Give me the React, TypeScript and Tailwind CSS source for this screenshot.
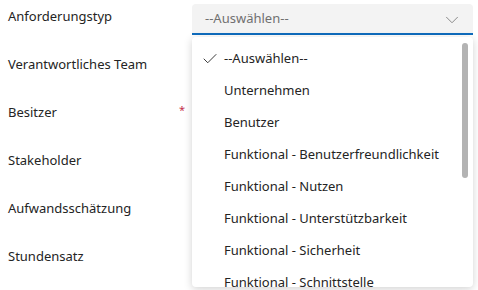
import { Check, ChevronDown } from 'lucide-react'

const LABELS = [
  { text: 'Anforderungstyp', required: false },
  { text: 'Verantwortliches Team', required: false },
  { text: 'Besitzer', required: true },
  { text: 'Stakeholder', required: false },
  { text: 'Aufwandsschätzung', required: false },
  { text: 'Stundensatz', required: false },
]

const OPTIONS = [
  '--Auswählen--',
  'Unternehmen',
  'Benutzer',
  'Funktional - Benutzerfreundlichkeit',
  'Funktional - Nutzen',
  'Funktional - Unterstützbarkeit',
  'Funktional - Sicherheit',
  'Funktional - Schnittstelle',
]

export default function App() {
  return (
    <div
      className="relative w-[478px] h-[290px] overflow-hidden bg-white text-[13px] text-[#242424]"
      style={{ fontFamily: '"Noto Sans", "Open Sans", sans-serif' }}
    >
      <div className="flex">
        <div className="w-[192px] pl-2 pr-[7px] pt-[6px]">
          {LABELS.map((l) => (
            <div key={l.text} className="flex h-12 justify-between leading-5">
              <span>{l.text}</span>
              {l.required && <span className="text-[11px] leading-4 text-[#c4314b]">*</span>}
            </div>
          ))}
        </div>

        <div className="w-[281px] pt-1">
          <div className="flex h-[31px] items-center justify-between rounded-t-[4px] border-b-2 border-[#0f6cbd] bg-[#f3f3f3] pl-[13px] pr-[10px]">
            <span className="text-[#707070]">--Auswählen--</span>
            <ChevronDown size={22} strokeWidth={1} className="mt-[3px] text-[#808080]" />
          </div>
        </div>
      </div>

      <div className="absolute left-[192px] top-[37px] h-[250px] w-[281px] overflow-hidden rounded-[4px] bg-white shadow-[0_2px_8px_rgba(0,0,0,0.18)]">
        <div className="pt-[6px]">
          {OPTIONS.map((o, i) => (
            <div key={o} className="relative flex h-8 items-center pl-8">
              {i === 0 && (
                <Check size={18} strokeWidth={1.2} className="absolute left-[9px] text-[#242424]" />
              )}
              <span>{o}</span>
            </div>
          ))}
        </div>
        <div className="absolute right-[5px] top-[6px] h-[135px] w-[6px] rounded-full bg-[#b3b3b3]" />
      </div>
    </div>
  )
}
